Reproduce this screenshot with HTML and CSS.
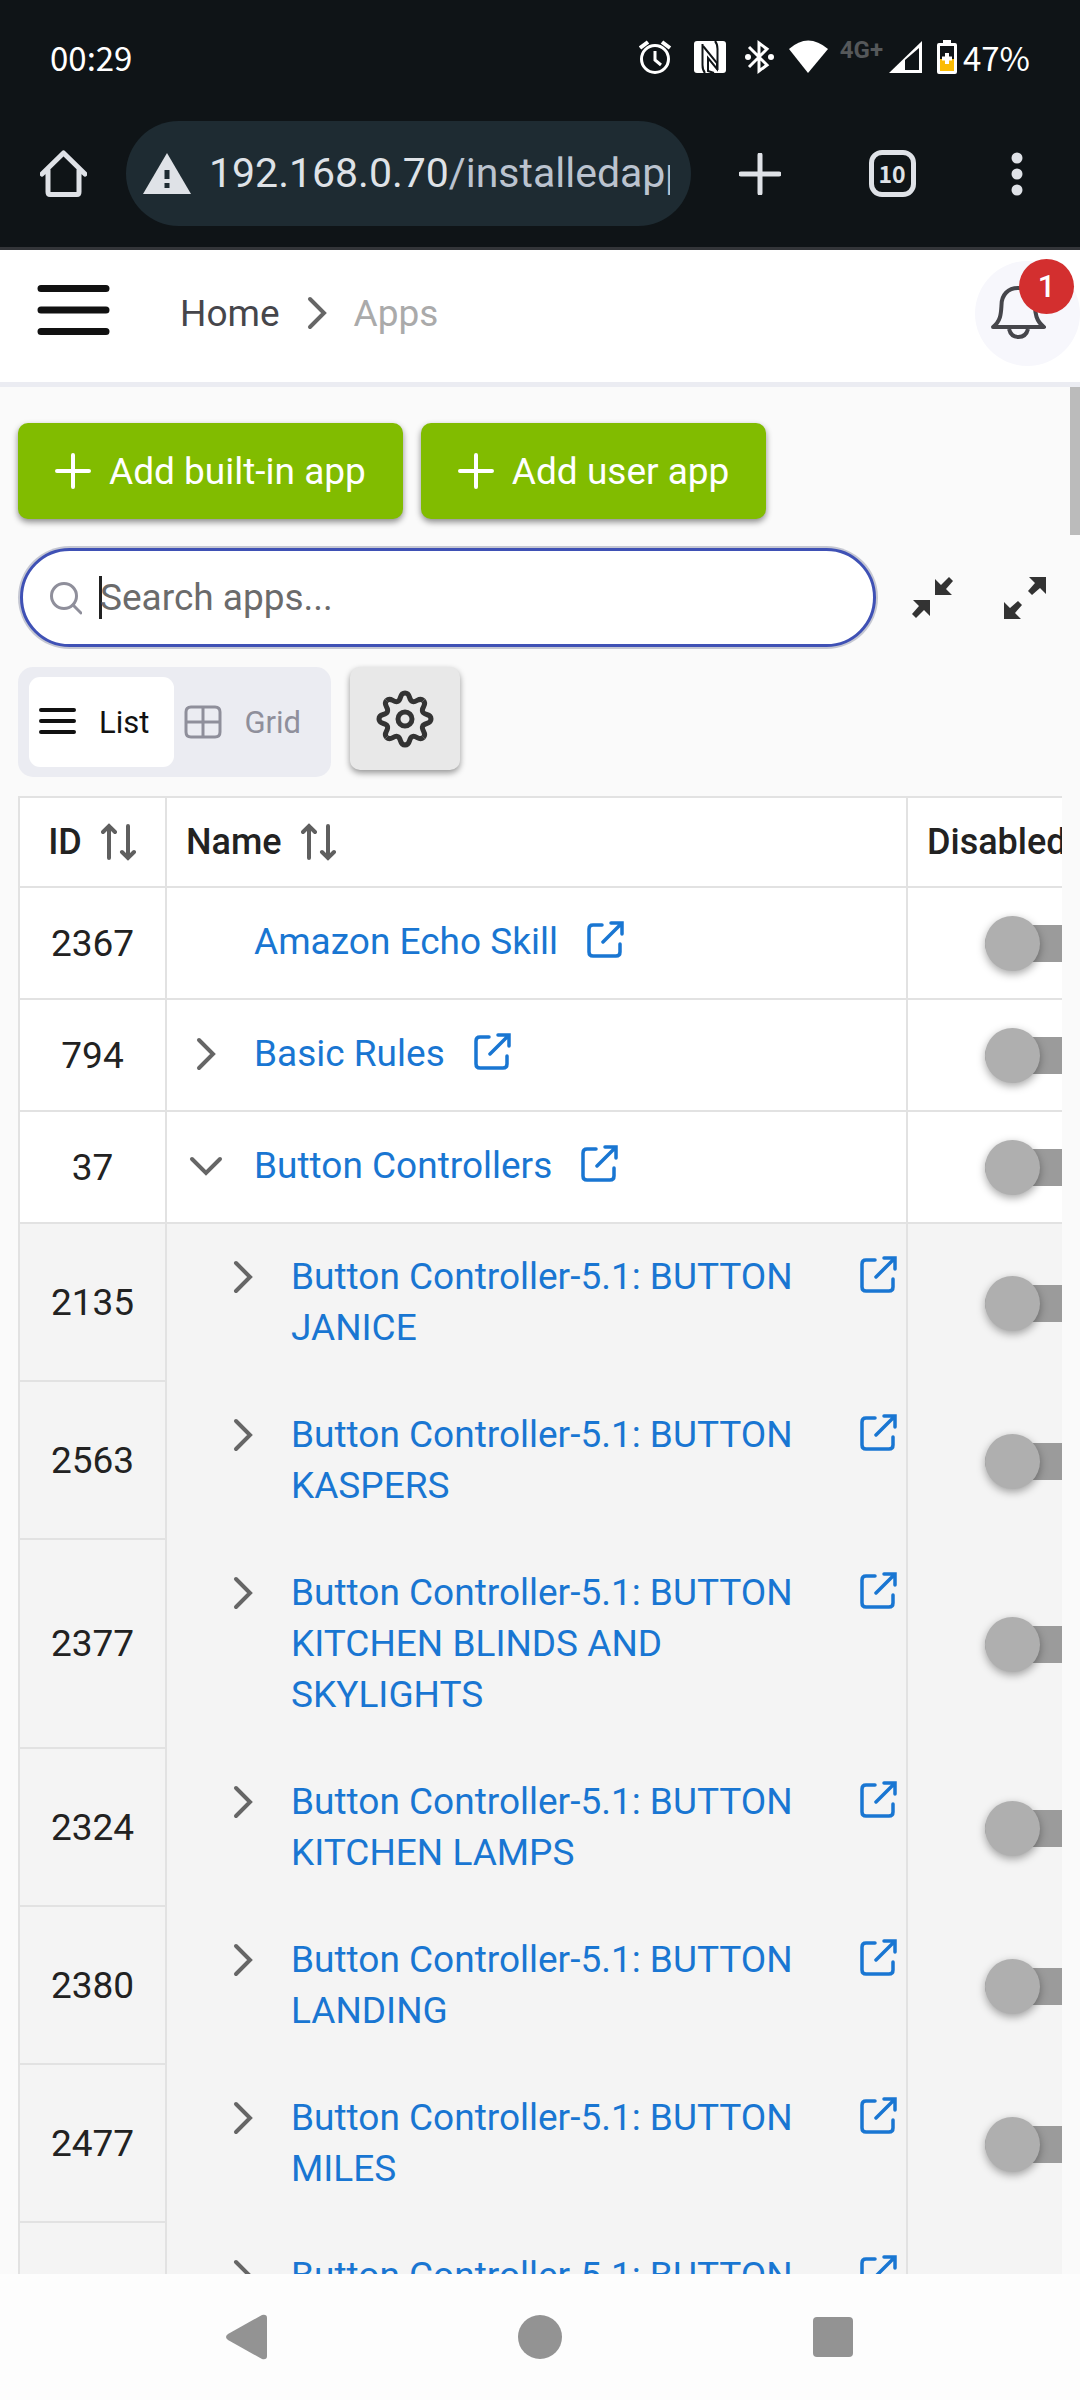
FILE: index.html
```html
<!DOCTYPE html>
<html lang="en">
<head>
    <meta charset="UTF-8">
    <meta name="viewport" content="width=device-width, initial-scale=1.0">
    <title>Apps</title>
    <link rel="stylesheet" href="styles.css">
</head>
<body>
    <!-- Shared icons -->
    <svg class="sprite" width="0" height="0" aria-hidden="true">
        <symbol id="plus" viewBox="0 0 36 36"><path d="M18 2V34M2 18H34" fill="none" stroke="currentColor" stroke-width="4" stroke-linecap="round"/></symbol>
        <symbol id="right" viewBox="0 0 38 34"><path d="M12 3L26 17L12 31" fill="none" stroke="currentColor" stroke-width="4" stroke-linecap="round"/></symbol>
        <symbol id="down" viewBox="0 0 38 34"><path d="M5 10L19 24L33 10" fill="none" stroke="currentColor" stroke-width="4" stroke-linecap="round"/></symbol>
        <symbol id="sort" viewBox="0 0 36 38"><path d="M8 3V35M2 9L8 3L14 9M27 3V35M21 29L27 35L33 29" fill="none" stroke="currentColor" stroke-width="4" stroke-linecap="round"/></symbol>
        <symbol id="open" viewBox="0 0 38 38"><path d="M15 4H6Q2 4 2 8V31Q2 35 6 35H29Q33 35 33 31V23M24 2H35V13M35 2L16 21" fill="none" stroke="currentColor" stroke-width="3.500" stroke-linecap="round"/></symbol>
        <path id="tooth" d="M26 0C26 6 19.3 3.1 17.6 7.3C15.8 11.4 22.6 14.1 18.4 18.4"/>
    </svg>

    <div class="status-bar">
        <span class="clock">00:29</span>
        <div class="status-icons">
            <svg width="49" height="34" viewBox="0 0 49 34"><g fill="none" stroke="#fff" stroke-width="3"><circle cx="16" cy="19" r="13.5"/><path d="M16 11V20L22 25"/><path d="M1 8L9 2M31 8L23 2" stroke-width="4"/></g></svg>
            <svg width="45" height="34" viewBox="0 0 45 34"><rect x="0" y="1" width="32" height="32" rx="3" fill="#fff"/><path d="M8.500 4V25Q8.500 30 11 33M23.500 30V9Q23.500 4 21 1" fill="none" stroke="#0f1417" stroke-width="2"/><path d="M9 6L23 23V29L14 18V31L20 33" fill="none" stroke="#0f1417" stroke-width="2"/></svg>
            <svg width="38" height="34" viewBox="0 0 38 34"><path d="M4 7L22 25L14 31V3L22 9L4 27" fill="none" stroke="#fff" stroke-width="3"/><circle cx="3" cy="17" r="3" fill="#fff"/><circle cx="26" cy="17" r="3" fill="#fff"/></svg>
            <svg width="45" height="34" viewBox="0 0 45 34"><path d="M0 9Q19 -8 39 9L19 33Z" fill="#fff"/></svg>
            <span class="network">4G+</span>
            <svg width="42" height="34" viewBox="0 0 42 34"><path d="M0 33L33 1V33Z" fill="#fff"/><path d="M16 20L30 8V30H16Z" fill="#0f1417"/></svg>
            <svg width="20" height="34" viewBox="0 0 20 34"><path d="M6 0H14V3H18Q20 3 20 5V32Q20 34 18 34H2Q0 34 0 32V5Q0 3 2 3H6Z" fill="#fff"/><path d="M3 6H17V19H3Z" fill="#0f1417"/><path d="M3 19H17V31H3Z" fill="#fbbc04"/><path d="M10 13V24M5 18.500H15" stroke="#fff" stroke-width="4"/></svg>
            <span class="battery">47%</span>
        </div>
    </div>

    <div class="browser-bar">
        <button class="home" aria-label="Home page">
            <svg width="47" height="47" viewBox="0 0 47 47"><path d="M2 24L23.500 3L45 24M8 20V42Q8 44.500 10 44.500H37Q39 44.500 39 42V20" fill="none" stroke="currentColor" stroke-width="5" stroke-linejoin="round" stroke-linecap="round"/></svg>
        </button>
        <div class="address">
            <svg width="48" height="41" viewBox="0 0 48 41"><path d="M24 0L48 41H0Z" fill="#dfe2e7"/><path d="M21.500 17H26.500V26H21.500ZM21.500 30H26.500V35H21.500Z" fill="#1e2b32"/></svg>
            <span class="url">192.168.0.70<span class="path">/installedapp</span></span>
        </div>
        <button class="tool" aria-label="New tab">
            <svg width="42" height="42" viewBox="0 0 42 42"><path d="M21 2V40M2 21H40" stroke="currentColor" stroke-width="5" stroke-linecap="round"/></svg>
        </button>
        <button class="tool" aria-label="Tabs"><span class="tab-count">10</span></button>
        <button class="tool more" aria-label="More">
            <svg width="12" height="44" viewBox="0 0 12 44"><circle cx="6" cy="6" r="5.500" fill="currentColor"/><circle cx="6" cy="22" r="5.500" fill="currentColor"/><circle cx="6" cy="38" r="5.500" fill="currentColor"/></svg>
        </button>
    </div>

    <header class="app-header">
        <button class="menu" aria-label="Menu">
            <svg width="73" height="56" viewBox="0 0 73 56"><path d="M4 3.500H69M4 25H69M4 46.500H69" stroke="#111" stroke-width="7" stroke-linecap="round"/></svg>
        </button>
        <nav class="breadcrumb">
            <a href="#">Home</a>
            <svg width="38" height="34"><use href="#right"/></svg>
            <span>Apps</span>
        </nav>
        <button class="bell" aria-label="Notifications">
            <svg width="105" height="105" viewBox="0 0 105 105"><g fill="none" stroke="#46464b" stroke-width="4" stroke-linejoin="round"><path d="M18 66C26 60 26 52 26.500 44C26.500 34 33 27 43 27C53 27 60 34 60 44C60 52 61 60 69 66Z"/><path d="M34 68Q36 76 43.500 76Q51 76 53 68"/></g></svg>
            <span class="badge">1</span>
        </button>
    </header>

    <main class="content">
        <div class="actions">
            <button class="add"><svg width="36" height="36"><use href="#plus"/></svg>Add built-in app</button>
            <button class="add"><svg width="36" height="36"><use href="#plus"/></svg>Add user app</button>
        </div>

        <div class="search-row">
            <label class="search">
                <svg width="32" height="34" viewBox="0 0 32 34"><path d="M23 24L31 32" stroke="#8f8f9b" stroke-width="3" stroke-linecap="round"/><circle cx="14" cy="15" r="12.500" fill="none" stroke="#8f8f9b" stroke-width="3"/></svg>
                <span class="caret"></span>
                <input type="text" placeholder="Search apps..." aria-label="Search apps">
            </label>
            <button class="plain" aria-label="Collapse all">
                <svg width="42" height="42" viewBox="0 0 42 42"><path d="M23 2V18H40L34 12L41 4L37 0L29 8ZM18 39V23H1L7 29L0 37L4 41L12 33Z" fill="#333"/></svg>
            </button>
            <button class="plain" aria-label="Expand all">
                <svg width="42" height="42" viewBox="0 0 42 42"><path d="M42 0H25L31 6L24 14L28 18L36 11L42 17ZM0 42H17L11 36L18 28L14 24L6 31L0 25Z" fill="#333"/></svg>
            </button>
        </div>

        <div class="view-row">
            <div class="view-switch">
                <button class="view active">
                    <svg width="38" height="34" viewBox="0 0 38 34"><path d="M2 5H35M2 16H35M2 27H35" stroke="currentColor" stroke-width="4" stroke-linecap="round"/></svg>
                    List
                </button>
                <button class="view">
                    <svg width="38" height="34" viewBox="0 0 38 34"><path d="M7 2H31Q36 2 36 7V27Q36 32 31 32H7Q2 32 2 27V7Q2 2 7 2ZM19 2V32M2 17H36" fill="none" stroke="currentColor" stroke-width="3"/></svg>
                    Grid
                </button>
            </div>
            <button class="settings" aria-label="Settings">
                <svg width="58" height="58" viewBox="-29 -29 58 58"><g fill="none" stroke="#333" stroke-width="5"><circle r="7"/><use href="#tooth"/><use href="#tooth" transform="rotate(45)"/><use href="#tooth" transform="rotate(90)"/><use href="#tooth" transform="rotate(135)"/><use href="#tooth" transform="rotate(180)"/><use href="#tooth" transform="rotate(225)"/><use href="#tooth" transform="rotate(270)"/><use href="#tooth" transform="rotate(315)"/></g></svg>
            </button>
        </div>

        <div class="table-wrap">
            <table>
                <thead>
                    <tr>
                        <th class="id"><span class="sort">ID<svg width="36" height="38"><use href="#sort"/></svg></span></th>
                        <th class="name"><span class="sort">Name<svg width="36" height="38"><use href="#sort"/></svg></span></th>
                        <th class="disabled">Disabled</th>
                    </tr>
                </thead>
                <tbody id="rows"></tbody>
            </table>
        </div>
        <div class="scrollbar"></div>
    </main>

    <nav class="system-nav">
        <button aria-label="Back"><svg width="44" height="46" viewBox="0 0 44 46"><path d="M3 20L37 1Q42 0 42 4V42Q42 46 37 45L3 26Q-1 23 3 20Z" fill="#939393"/></svg></button>
        <button aria-label="Home"><svg width="44" height="46" viewBox="0 0 44 46"><circle cx="22" cy="23" r="22" fill="#939393"/></svg></button>
        <button aria-label="Recents"><svg width="44" height="46" viewBox="0 0 44 46"><rect x="2" y="3" width="40" height="40" rx="4" fill="#939393"/></svg></button>
    </nav>

    <script src="script.js"></script>
</body>
</html>
```
FILE: script.js
```js
const controller = 'Button Controller-5.1: BUTTON';

const apps = [
    { id: 2367, name: 'Amazon Echo Skill' },
    { id: 794, name: 'Basic Rules', icon: 'right' },
    { id: 37, name: 'Button Controllers', icon: 'down' },
    { id: 2135, name: `${controller} JANICE`, icon: 'right', child: true },
    { id: 2563, name: `${controller} KASPERS`, icon: 'right', child: true },
    { id: 2377, name: `${controller} KITCHEN BLINDS AND SKYLIGHTS`, icon: 'right', child: true },
    { id: 2324, name: `${controller} KITCHEN LAMPS`, icon: 'right', child: true },
    { id: 2380, name: `${controller} LANDING`, icon: 'right', child: true },
    { id: 2477, name: `${controller} MILES`, icon: 'right', child: true },
    { id: '', name: controller, icon: 'right', child: true }
];

const rows = document.getElementById('rows');

apps.forEach(app => {
    const row = document.createElement('tr');
    row.className = app.child ? 'child' : 'parent';

    const arrow = app.icon
        ? `<button class="expander" aria-label="Toggle ${app.name}"><svg width="38" height="34"><use href="#${app.icon}"/></svg></button>`
        : '<span class="expander"></span>';
    const toggle = app.id
        ? `<input type="checkbox" class="switch" aria-label="Disable ${app.name}">`
        : '';

    row.innerHTML = `
        <td class="id">${app.id}</td>
        <td class="name">
            <div class="name-line">
                ${arrow}
                <a href="#">${app.name}</a>
                <a class="open" href="#" aria-label="Open ${app.name}"><svg width="38" height="38"><use href="#open"/></svg></a>
            </div>
        </td>
        <td class="disabled">${toggle}</td>`;

    rows.appendChild(row);
});
```
FILE: styles.css
```css
:root {
    --dark: #0f1417;
    --green: #81bc00;
    --link: #1976d2;
    --line: #e2e2e2;
    --soft: #ebecf2;
}

* {
    box-sizing: border-box;
}

body {
    margin: 0;
    height: 100vh;
    display: flex;
    flex-direction: column;
    font-family: Roboto, sans-serif;
    font-size: 37px;
    line-height: 51px;
    color: #222;
    background: #fafafa;
}

button {
    font: inherit;
    color: inherit;
    border: 0;
    padding: 0;
    background: none;
    display: flex;
    align-items: center;
    justify-content: center;
    flex: none;
}

a {
    text-decoration: none;
}

svg {
    flex: none;
    display: block;
}

.sprite {
    position: absolute;
}

/* Phone status bar */
.status-bar {
    flex: none;
    height: 114px;
    padding: 0 50px;
    display: flex;
    align-items: center;
    justify-content: space-between;
    background: var(--dark);
    color: #fff;
    font-family: "Noto Sans CJK JP", sans-serif;
    font-size: 33px;
}

.status-icons {
    display: flex;
    align-items: center;
    gap: 6px;
}

.network {
    align-self: flex-start;
    font-family: Roboto, sans-serif;
    font-size: 24px;
    font-weight: 700;
    line-height: 36px;
    color: #55585a;
}

/* Browser toolbar */
.browser-bar {
    flex: none;
    display: flex;
    align-items: center;
    padding: 7px 4px 21px 40px;
    background: var(--dark);
    border-bottom: 3px solid #333539;
    color: #dfe2e7;
}

.home {
    margin-right: 39px;
}

.address {
    flex: 1;
    min-width: 0;
    height: 105px;
    margin-right: 3px;
    padding: 0 21px 0 17px;
    border-radius: 53px;
    background: #1e2b32;
    display: flex;
    align-items: center;
    gap: 18px;
}

.url {
    flex: 1;
    overflow: hidden;
    white-space: nowrap;
    font-size: 41px;
}

.path {
    color: #bbc3cf;
}

.tool {
    width: 132px;
}

.more {
    width: 118px;
}

.tab-count {
    width: 47px;
    height: 47px;
    border: 5px solid;
    border-radius: 13px;
    font-family: "Noto Sans CJK JP", sans-serif;
    font-size: 23px;
    font-weight: 700;
    line-height: 36px;
    text-align: center;
}

/* App header */
.app-header {
    flex: none;
    height: 137px;
    padding: 0 0 6px 37px;
    display: flex;
    align-items: center;
    background: #fff;
    border-bottom: 5px solid var(--soft);
}

.breadcrumb {
    flex: 1;
    margin-left: 70px;
    display: flex;
    align-items: center;
    gap: 18px;
    color: #666;
}

.breadcrumb a {
    color: #46464b;
}

.breadcrumb span {
    color: #aaa;
}

.bell {
    position: relative;
    border-radius: 50%;
    background: #f7f7fc;
}

.badge {
    position: absolute;
    top: -2px;
    right: 6px;
    width: 55px;
    height: 55px;
    border-radius: 50%;
    background: #d32f2f;
    color: #fff;
    font-size: 31px;
    font-weight: 500;
    line-height: 55px;
}

/* Page content */
.content {
    flex: 1;
    min-height: 0;
    overflow: hidden;
    position: relative;
    padding: 36px 18px 0;
}

.scrollbar {
    position: absolute;
    top: 0;
    right: 0;
    width: 10px;
    height: 148px;
    background: #bbb;
}

.actions {
    display: flex;
    gap: 18px;
    margin-bottom: 27px;
}

.add {
    height: 96px;
    padding: 0 37px;
    gap: 18px;
    border-radius: 10px;
    background: var(--green);
    color: #fff;
    box-shadow: 0 3px 6px rgba(0, 0, 0, 0.45);
}

.search-row {
    display: flex;
    align-items: center;
    gap: 50px;
    padding-right: 16px;
    margin-bottom: 18px;
}

.search {
    flex: 1;
    height: 99px;
    margin: 2px -14px 2px 2px;
    padding: 0 27px;
    border: 3px solid #3f51b5;
    border-radius: 50px;
    background: #fff;
    box-shadow: 0 0 0 2px #c5c7d2;
    display: flex;
    align-items: center;
}

.search input {
    flex: 1;
    min-width: 0;
    padding: 0;
    border: 0;
    outline: 0;
    background: none;
    font: inherit;
}

.search input::placeholder {
    color: #6b6b6b;
}

.caret {
    width: 3px;
    height: 43px;
    margin-left: 17px;
    margin-right: -2px;
    background: #222;
}

.view-row {
    display: flex;
    align-items: flex-start;
    gap: 19px;
    margin-bottom: 19px;
}

.view-switch {
    height: 110px;
    padding: 10px 19px 10px 11px;
    border-radius: 15px;
    background: var(--soft);
    display: flex;
}

.view {
    padding: 0 11px 0 10px;
    gap: 22px;
    border-radius: 11px;
    font-size: 31px;
    color: #8f8f9b;
}

.view.active {
    padding-right: 25px;
    background: #fff;
    color: #111;
}

.settings {
    width: 110px;
    height: 103px;
    border-radius: 10px;
    background: #e8e8e8;
    box-shadow: 0 3px 6px rgba(0, 0, 0, 0.4);
}

/* Apps table */
.table-wrap {
    overflow: hidden;
}

table {
    width: 1145px;
    table-layout: fixed;
    border-collapse: separate;
    border-spacing: 0;
    border-top: 2px solid var(--line);
    border-left: 2px solid var(--line);
    background: #fff;
}

th,
td {
    padding: 0;
    border-right: 2px solid var(--line);
    border-bottom: 2px solid var(--line);
}

th {
    height: 90px;
    font-size: 36px;
    font-weight: 500;
    text-align: left;
}

th.id {
    width: 147px;
}

th.name {
    width: 741px;
}

th.name,
th.disabled {
    padding-left: 19px;
}

.sort {
    display: flex;
    align-items: center;
    gap: 19px;
}

.sort svg {
    color: #5f5f5f;
}

th.id .sort {
    justify-content: center;
}

td.id {
    text-align: center;
}

td.name {
    padding: 28px 8px 28px 20px;
    vertical-align: top;
}

.parent td {
    height: 112px;
}

.child td {
    background: #f4f4f4;
}

.child td.name {
    padding: 27px 8px 29px 57px;
}

.child td.name,
.child td.disabled {
    border-bottom: 0;
}

.name-line {
    display: flex;
    align-items: flex-start;
    gap: 29px;
}

.name-line a {
    color: var(--link);
}

.expander {
    flex: none;
    width: 38px;
    height: 51px;
    color: #666;
}

.open {
    flex: none;
    height: 47px;
    display: flex;
    align-items: center;
}

.child .open {
    margin-left: auto;
}

.switch {
    appearance: none;
    width: 99px;
    height: 37px;
    margin: 0 auto;
    border-radius: 19px;
    background: #9b9b9b;
    display: flex;
    align-items: center;
}

.switch::before {
    content: "";
    flex: none;
    width: 55px;
    height: 55px;
    border-radius: 50%;
    background: #afafaf;
    box-shadow: 0 3px 8px rgba(0, 0, 0, 0.35);
}

/* Android navigation */
.system-nav {
    flex: none;
    height: 126px;
    padding: 0 100px;
    display: grid;
    grid-template-columns: repeat(3, 1fr);
    justify-items: center;
    align-items: center;
    background: #fdfdfd;
}
```
